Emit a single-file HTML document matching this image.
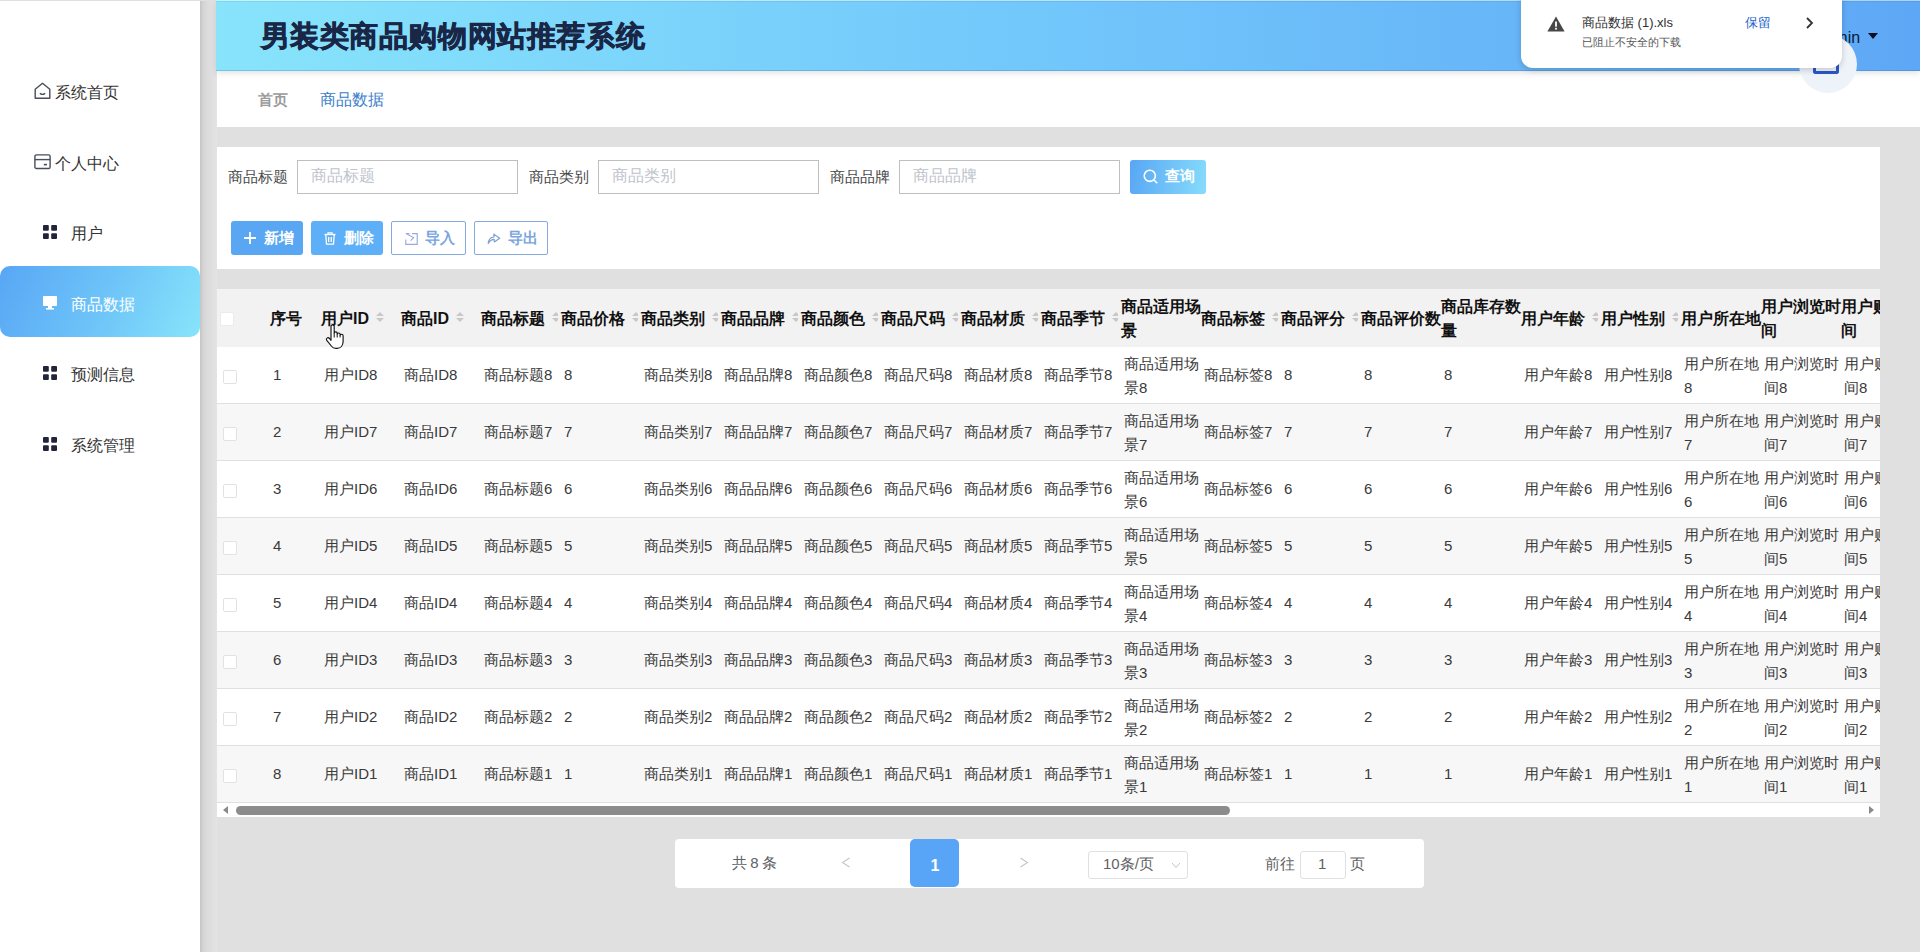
<!DOCTYPE html><html><head><meta charset="utf-8"><style>
*{margin:0;padding:0;box-sizing:border-box}
html,body{width:1920px;height:952px;overflow:hidden;background:#e0e0e0;font-family:"Liberation Sans",sans-serif;position:relative}
.a{position:absolute}
.side{left:0;top:1px;width:200px;height:951px;background:#fff}
.sideshadow{left:200px;top:1px;width:17px;height:951px;background:linear-gradient(90deg,#c4c4c4 0,#d4d4d4 3px,#dcdcdc 8px,#e0e0e0 13px,#e4e4e4 17px)}
.mi{left:0;width:200px;height:71px;font-size:16px;color:#333;white-space:nowrap}
.mi span{position:absolute;line-height:16px}
.active{background:linear-gradient(115deg,#58a6f5 0%,#6fc6f8 55%,#88e4fb 100%);border-radius:10px;color:#fff}
.header{left:216px;top:0;width:1704px;height:71px;background:linear-gradient(90deg,#88e4fb 0%,#73c9fb 45%,#5ea7f6 100%);box-shadow:inset 0 -1px 0 rgba(40,90,150,.22),0 2px 6px rgba(0,0,0,.12);z-index:2}
.title{left:44.5px;top:17px;font-size:29px;font-weight:bold;color:#192646;line-height:38px;white-space:nowrap;letter-spacing:0.6px;-webkit-text-stroke:0.7px #192646}
.tabs{left:217px;top:70px;width:1703px;height:57px;background:#fff;z-index:1}
.panel{background:#fff}
.lbl{font-size:15px;color:#4a4a4a;line-height:16px;white-space:nowrap}
.inp{height:34px;width:221px;border:1px solid #bfbfbf;background:#fff}
.ph{font-size:16px;color:#c0c4cc;line-height:16px;white-space:nowrap}
.btn{height:34px;border-radius:3px;font-size:15px;font-weight:bold;white-space:nowrap}
.th{font-size:16px;font-weight:bold;color:#111;line-height:24px;white-space:nowrap}
.td{font-size:15px;color:#3a3a3a;line-height:24px;white-space:nowrap}
.cb{width:14px;height:14px;border:1px solid #e2e2e2;border-radius:2px;background:#fff}
</style></head><body>
<div class="a side"></div><div class="a sideshadow"></div>
<div class="a" style="left:34px;top:82px"><svg width="17" height="18" viewBox="0 0 17 18" fill="none" stroke="#4a4d5a" stroke-width="1.4" stroke-linejoin="round"><path d="M1.2 7.2 L8.5 1.2 L15.8 7.2 V16.3 H1.2 Z"/><path d="M6.3 11.6 Q8.5 13.2 10.7 11.6" stroke-linecap="round"/></svg></div>
<div class="a mi" style="left:55px;top:85px;width:auto;height:auto;line-height:16px">系统首页</div>
<div class="a" style="left:33.5px;top:153.5px"><svg width="17" height="16" viewBox="0 0 17 16" fill="none" stroke="#4a4d5a" stroke-width="1.4"><rect x="0.9" y="0.9" width="15.2" height="13.6" rx="1.6"/><path d="M0.9 5.6 H16.1"/><path d="M9.8 10.6 H13" stroke-width="1.6"/></svg></div>
<div class="a mi" style="left:55px;top:155.5px;width:auto;height:auto;line-height:16px">个人中心</div>
<div class="a" style="left:43px;top:225px"><svg width="14" height="14" viewBox="0 0 14 14" fill="#22243a"><rect x="0" y="0" width="5.8" height="5.8" rx="1"/><rect x="8.2" y="0" width="5.8" height="5.8" rx="1"/><rect x="0" y="8.2" width="5.8" height="5.8" rx="1"/><rect x="8.2" y="8.2" width="5.8" height="5.8" rx="1"/></svg></div>
<div class="a mi" style="left:71px;top:226px;width:auto;height:auto;line-height:16px">用户</div>
<div class="a active" style="left:0;top:266px;width:200px;height:71px"></div>
<div class="a" style="left:43px;top:296px"><svg width="14" height="14" viewBox="0 0 14 14" fill="#fff"><rect x="0" y="0" width="14" height="10" rx="0.8"/><rect x="5" y="10" width="4" height="2"/><rect x="3" y="12" width="8" height="1.6"/></svg></div>
<div class="a mi" style="left:71px;top:297px;width:auto;height:auto;line-height:16px;color:#fff">商品数据</div>
<div class="a" style="left:43px;top:366px"><svg width="14" height="14" viewBox="0 0 14 14" fill="#22243a"><rect x="0" y="0" width="5.8" height="5.8" rx="1"/><rect x="8.2" y="0" width="5.8" height="5.8" rx="1"/><rect x="0" y="8.2" width="5.8" height="5.8" rx="1"/><rect x="8.2" y="8.2" width="5.8" height="5.8" rx="1"/></svg></div>
<div class="a mi" style="left:71px;top:367px;width:auto;height:auto;line-height:16px">预测信息</div>
<div class="a" style="left:43px;top:437px"><svg width="14" height="14" viewBox="0 0 14 14" fill="#22243a"><rect x="0" y="0" width="5.8" height="5.8" rx="1"/><rect x="8.2" y="0" width="5.8" height="5.8" rx="1"/><rect x="0" y="8.2" width="5.8" height="5.8" rx="1"/><rect x="8.2" y="8.2" width="5.8" height="5.8" rx="1"/></svg></div>
<div class="a mi" style="left:71px;top:438px;width:auto;height:auto;line-height:16px">系统管理</div>
<div class="a header">
<div class="a" style="left:0;top:0;width:1704px;height:1px;background:rgba(255,255,255,.5)"></div><div class="a" style="left:0;top:1px;width:1704px;height:1px;background:rgba(0,70,110,.08)"></div>
<div class="a title">男装类商品购物网站推荐系统</div>
<div class="a" style="left:1600.5px;top:29.5px;font-size:16px;color:#0a1a33;line-height:16px">admin</div>
<div class="a" style="left:1652px;top:32.8px;width:0;height:0;border-left:5px solid transparent;border-right:5px solid transparent;border-top:6px solid #0a0f20"></div>
</div>
<div class="a tabs"></div>
<div class="a " style="left:258px;top:92px;font-size:15px;font-weight:bold;color:#9b9b9b;line-height:16px;z-index:3">首页</div>
<div class="a " style="left:320px;top:92px;font-size:16px;color:#3a7ec9;line-height:16px;z-index:3">商品数据</div>
<div class="a" style="left:1799px;top:35px;width:58px;height:58px;border-radius:50%;background:#eef2f9;z-index:4"></div>
<div class="a" style="left:1813px;top:56px;width:26px;height:18px;border:3px solid #2b57c7;border-top:none;border-radius:0 0 3px 3px;z-index:4"></div>
<div class="a" style="left:1521px;top:-12px;width:321px;height:79.5px;background:#fff;border-radius:12px;box-shadow:0 2px 6px rgba(0,0,0,.18);z-index:5">
<svg class="a" style="left:26px;top:28px" width="18" height="16" viewBox="0 0 18 16"><path d="M9 0.5 L17.6 15.5 H0.4 Z" fill="#474747"/><rect x="8.1" y="5.5" width="1.8" height="5.2" fill="#fff"/><rect x="8.1" y="11.8" width="1.8" height="1.8" fill="#fff"/></svg>
<div class="a" style="left:61px;top:27px;font-size:13px;color:#303030;line-height:16px;white-space:nowrap">商品数据 (1).xls</div>
<div class="a" style="left:61px;top:48px;font-size:11px;color:#555;line-height:13px;white-space:nowrap">已阻止不安全的下载</div>
<div class="a" style="left:224px;top:27px;font-size:13px;color:#1a62c9;line-height:16px;white-space:nowrap">保留</div>
<svg class="a" style="left:284px;top:29px" width="10" height="12" viewBox="0 0 10 12" fill="none" stroke="#333" stroke-width="1.8"><path d="M2 1 L7 6 L2 11"/></svg>
</div>
<div class="a panel" style="left:217px;top:147px;width:1663px;height:122px"></div>
<div class="a lbl" style="left:228px;top:169px;">商品标题</div>
<div class="a inp" style="left:297px;top:160px"></div>
<div class="a ph" style="left:311px;top:168px;">商品标题</div>
<div class="a lbl" style="left:529px;top:169px;">商品类别</div>
<div class="a inp" style="left:598px;top:160px"></div>
<div class="a ph" style="left:612px;top:168px;">商品类别</div>
<div class="a lbl" style="left:830px;top:169px;">商品品牌</div>
<div class="a inp" style="left:899px;top:160px"></div>
<div class="a ph" style="left:913px;top:168px;">商品品牌</div>
<div class="a btn" style="left:1130px;top:160px;width:76px;background:linear-gradient(100deg,#58a6f5,#86dcfb)"></div>
<svg class="a" style="left:1143px;top:169px" width="15" height="15" viewBox="0 0 15 15" fill="none" stroke="#fff" stroke-width="1.6"><circle cx="6.8" cy="6.8" r="5.6"/><path d="M11 11 L13.8 13.8" stroke-linecap="round"/></svg>
<div class="a " style="left:1165px;top:168px;font-size:15px;font-weight:bold;color:#fff;line-height:16px">查询</div>
<div class="a btn" style="left:231px;top:221px;width:72px;background:#59a6f2"></div>
<svg class="a" style="left:244px;top:232px" width="12" height="12" viewBox="0 0 12 12" stroke="#fff" stroke-width="1.8"><path d="M6 0 V12 M0 6 H12"/></svg>
<div class="a " style="left:264px;top:230px;font-size:15px;font-weight:bold;color:#fff;line-height:16px">新增</div>
<div class="a btn" style="left:311px;top:221px;width:72px;background:#5db0f7"></div>
<svg class="a" style="left:324px;top:232px" width="12" height="13" viewBox="0 0 12 13" fill="none" stroke="#fff" stroke-width="1.3"><path d="M0.5 2.5 H11.5"/><path d="M4 2.5 V0.8 H8 V2.5"/><path d="M1.8 2.5 L2.5 12.2 H9.5 L10.2 2.5"/><path d="M4.7 5 V10 M7.3 5 V10"/></svg>
<div class="a " style="left:344px;top:230px;font-size:15px;font-weight:bold;color:#fff;line-height:16px">删除</div>
<div class="a btn" style="left:391px;top:221px;width:75px;border:1px solid #84a9dc;border-radius:2px;background:#fff"></div>
<svg class="a" style="left:405px;top:233px" width="14" height="13" viewBox="0 0 14 13" fill="none" stroke="#9ba9de" stroke-width="1.15"><path d="M0.8 0.6 H4.4"/><path d="M7 0.6 H12.2 V11.4 H0.8 V6.5"/><path d="M1.8 0.9 L8.6 4.6 L5.6 7.6"/></svg>
<div class="a " style="left:425px;top:230px;font-size:15px;font-weight:bold;color:#79a5e0;line-height:16px">导入</div>
<div class="a btn" style="left:474px;top:221px;width:74px;border:1px solid #84a9dc;border-radius:2px;background:#fff"></div>
<svg class="a" style="left:487px;top:233px" width="14" height="12" viewBox="0 0 14 12" fill="none" stroke="#7a9fd2" stroke-width="1.15" stroke-linejoin="round"><path d="M1.2 10.6 C1.5 6.6 3.5 4.2 7 4 L6.8 1.1 L12.7 5.3 L7.3 8.9 L7.2 6.3 C4.5 6.3 2.6 7.8 1.2 10.6 Z"/></svg>
<div class="a " style="left:508px;top:230px;font-size:15px;font-weight:bold;color:#79a5e0;line-height:16px">导出</div>
<div class="a panel" style="left:217px;top:289px;width:1663px;height:528px;overflow:hidden">
<div class="a" style="left:0;top:0;width:1663px;height:58px;background:#f2f2f2"></div>
<div class="a cb" style="left:3px;top:23px;border-color:#ebebeb"></div>
<div class="a th" style="left:53px;top:18px;">序号</div>
<div class="a th" style="left:104px;top:18px;">用户ID</div>
<div class="a th" style="left:184px;top:18px;">商品ID</div>
<div class="a th" style="left:264px;top:18px;">商品标题</div>
<div class="a th" style="left:344px;top:18px;">商品价格</div>
<div class="a th" style="left:424px;top:18px;">商品类别</div>
<div class="a th" style="left:504px;top:18px;">商品品牌</div>
<div class="a th" style="left:584px;top:18px;">商品颜色</div>
<div class="a th" style="left:664px;top:18px;">商品尺码</div>
<div class="a th" style="left:744px;top:18px;">商品材质</div>
<div class="a th" style="left:824px;top:18px;">商品季节</div>
<div class="a th" style="left:904px;top:6px;">商品适用场<br>景</div>
<div class="a th" style="left:984px;top:18px;">商品标签</div>
<div class="a th" style="left:1064px;top:18px;">商品评分</div>
<div class="a th" style="left:1144px;top:18px;">商品评价数</div>
<div class="a th" style="left:1224px;top:6px;">商品库存数<br>量</div>
<div class="a th" style="left:1304px;top:18px;">用户年龄</div>
<div class="a th" style="left:1384px;top:18px;">用户性别</div>
<div class="a th" style="left:1464px;top:18px;">用户所在地</div>
<div class="a th" style="left:1544px;top:6px;">用户浏览时<br>间</div>
<div class="a th" style="left:1624px;top:6px;">用户购买时<br>间</div>
<div class="a" style="left:159px;top:23px;width:8px;height:11px"><div class="a" style="left:0;top:0;width:0;height:0;border-left:4px solid transparent;border-right:4px solid transparent;border-bottom:4.5px solid #c8c8c8"></div><div class="a" style="left:0;top:6px;width:0;height:0;border-left:4px solid transparent;border-right:4px solid transparent;border-top:4.5px solid #c8c8c8"></div></div>
<div class="a" style="left:239px;top:23px;width:8px;height:11px"><div class="a" style="left:0;top:0;width:0;height:0;border-left:4px solid transparent;border-right:4px solid transparent;border-bottom:4.5px solid #c8c8c8"></div><div class="a" style="left:0;top:6px;width:0;height:0;border-left:4px solid transparent;border-right:4px solid transparent;border-top:4.5px solid #c8c8c8"></div></div>
<div class="a" style="left:335px;top:23px;width:6px;height:11px;overflow:hidden"><div class="a" style="left:0;top:0;width:0;height:0;border-left:4px solid transparent;border-right:4px solid transparent;border-bottom:4.5px solid #c8c8c8"></div><div class="a" style="left:0;top:6px;width:0;height:0;border-left:4px solid transparent;border-right:4px solid transparent;border-top:4.5px solid #c8c8c8"></div></div>
<div class="a" style="left:415px;top:23px;width:6px;height:11px;overflow:hidden"><div class="a" style="left:0;top:0;width:0;height:0;border-left:4px solid transparent;border-right:4px solid transparent;border-bottom:4.5px solid #c8c8c8"></div><div class="a" style="left:0;top:6px;width:0;height:0;border-left:4px solid transparent;border-right:4px solid transparent;border-top:4.5px solid #c8c8c8"></div></div>
<div class="a" style="left:495px;top:23px;width:6px;height:11px;overflow:hidden"><div class="a" style="left:0;top:0;width:0;height:0;border-left:4px solid transparent;border-right:4px solid transparent;border-bottom:4.5px solid #c8c8c8"></div><div class="a" style="left:0;top:6px;width:0;height:0;border-left:4px solid transparent;border-right:4px solid transparent;border-top:4.5px solid #c8c8c8"></div></div>
<div class="a" style="left:575px;top:23px;width:6px;height:11px;overflow:hidden"><div class="a" style="left:0;top:0;width:0;height:0;border-left:4px solid transparent;border-right:4px solid transparent;border-bottom:4.5px solid #c8c8c8"></div><div class="a" style="left:0;top:6px;width:0;height:0;border-left:4px solid transparent;border-right:4px solid transparent;border-top:4.5px solid #c8c8c8"></div></div>
<div class="a" style="left:655px;top:23px;width:6px;height:11px;overflow:hidden"><div class="a" style="left:0;top:0;width:0;height:0;border-left:4px solid transparent;border-right:4px solid transparent;border-bottom:4.5px solid #c8c8c8"></div><div class="a" style="left:0;top:6px;width:0;height:0;border-left:4px solid transparent;border-right:4px solid transparent;border-top:4.5px solid #c8c8c8"></div></div>
<div class="a" style="left:735px;top:23px;width:6px;height:11px;overflow:hidden"><div class="a" style="left:0;top:0;width:0;height:0;border-left:4px solid transparent;border-right:4px solid transparent;border-bottom:4.5px solid #c8c8c8"></div><div class="a" style="left:0;top:6px;width:0;height:0;border-left:4px solid transparent;border-right:4px solid transparent;border-top:4.5px solid #c8c8c8"></div></div>
<div class="a" style="left:815px;top:23px;width:6px;height:11px;overflow:hidden"><div class="a" style="left:0;top:0;width:0;height:0;border-left:4px solid transparent;border-right:4px solid transparent;border-bottom:4.5px solid #c8c8c8"></div><div class="a" style="left:0;top:6px;width:0;height:0;border-left:4px solid transparent;border-right:4px solid transparent;border-top:4.5px solid #c8c8c8"></div></div>
<div class="a" style="left:895px;top:23px;width:6px;height:11px;overflow:hidden"><div class="a" style="left:0;top:0;width:0;height:0;border-left:4px solid transparent;border-right:4px solid transparent;border-bottom:4.5px solid #c8c8c8"></div><div class="a" style="left:0;top:6px;width:0;height:0;border-left:4px solid transparent;border-right:4px solid transparent;border-top:4.5px solid #c8c8c8"></div></div>
<div class="a" style="left:1055px;top:23px;width:6px;height:11px;overflow:hidden"><div class="a" style="left:0;top:0;width:0;height:0;border-left:4px solid transparent;border-right:4px solid transparent;border-bottom:4.5px solid #c8c8c8"></div><div class="a" style="left:0;top:6px;width:0;height:0;border-left:4px solid transparent;border-right:4px solid transparent;border-top:4.5px solid #c8c8c8"></div></div>
<div class="a" style="left:1135px;top:23px;width:6px;height:11px;overflow:hidden"><div class="a" style="left:0;top:0;width:0;height:0;border-left:4px solid transparent;border-right:4px solid transparent;border-bottom:4.5px solid #c8c8c8"></div><div class="a" style="left:0;top:6px;width:0;height:0;border-left:4px solid transparent;border-right:4px solid transparent;border-top:4.5px solid #c8c8c8"></div></div>
<div class="a" style="left:1375px;top:23px;width:6px;height:11px;overflow:hidden"><div class="a" style="left:0;top:0;width:0;height:0;border-left:4px solid transparent;border-right:4px solid transparent;border-bottom:4.5px solid #c8c8c8"></div><div class="a" style="left:0;top:6px;width:0;height:0;border-left:4px solid transparent;border-right:4px solid transparent;border-top:4.5px solid #c8c8c8"></div></div>
<div class="a" style="left:1455px;top:23px;width:6px;height:11px;overflow:hidden"><div class="a" style="left:0;top:0;width:0;height:0;border-left:4px solid transparent;border-right:4px solid transparent;border-bottom:4.5px solid #c8c8c8"></div><div class="a" style="left:0;top:6px;width:0;height:0;border-left:4px solid transparent;border-right:4px solid transparent;border-top:4.5px solid #c8c8c8"></div></div>
<div class="a" style="left:0;top:58px;width:1663px;height:57px;background:#fff;border-bottom:1px solid #e0e0e0"></div>
<div class="a cb" style="left:6px;top:81px;"></div>
<div class="a td" style="left:56px;top:74px;">1</div>
<div class="a td" style="left:107px;top:74px;">用户ID8</div>
<div class="a td" style="left:187px;top:74px;">商品ID8</div>
<div class="a td" style="left:267px;top:74px;">商品标题8</div>
<div class="a td" style="left:347px;top:74px;">8</div>
<div class="a td" style="left:427px;top:74px;">商品类别8</div>
<div class="a td" style="left:507px;top:74px;">商品品牌8</div>
<div class="a td" style="left:587px;top:74px;">商品颜色8</div>
<div class="a td" style="left:667px;top:74px;">商品尺码8</div>
<div class="a td" style="left:747px;top:74px;">商品材质8</div>
<div class="a td" style="left:827px;top:74px;">商品季节8</div>
<div class="a td" style="left:907px;top:63px;">商品适用场<br>景8</div>
<div class="a td" style="left:987px;top:74px;">商品标签8</div>
<div class="a td" style="left:1067px;top:74px;">8</div>
<div class="a td" style="left:1147px;top:74px;">8</div>
<div class="a td" style="left:1227px;top:74px;">8</div>
<div class="a td" style="left:1307px;top:74px;">用户年龄8</div>
<div class="a td" style="left:1387px;top:74px;">用户性别8</div>
<div class="a td" style="left:1467px;top:63px;">用户所在地<br>8</div>
<div class="a td" style="left:1547px;top:63px;">用户浏览时<br>间8</div>
<div class="a td" style="left:1627px;top:63px;">用户购买时<br>间8</div>
<div class="a" style="left:0;top:115px;width:1663px;height:57px;background:#f7f7f7;border-bottom:1px solid #e0e0e0"></div>
<div class="a cb" style="left:6px;top:138px;"></div>
<div class="a td" style="left:56px;top:131px;">2</div>
<div class="a td" style="left:107px;top:131px;">用户ID7</div>
<div class="a td" style="left:187px;top:131px;">商品ID7</div>
<div class="a td" style="left:267px;top:131px;">商品标题7</div>
<div class="a td" style="left:347px;top:131px;">7</div>
<div class="a td" style="left:427px;top:131px;">商品类别7</div>
<div class="a td" style="left:507px;top:131px;">商品品牌7</div>
<div class="a td" style="left:587px;top:131px;">商品颜色7</div>
<div class="a td" style="left:667px;top:131px;">商品尺码7</div>
<div class="a td" style="left:747px;top:131px;">商品材质7</div>
<div class="a td" style="left:827px;top:131px;">商品季节7</div>
<div class="a td" style="left:907px;top:120px;">商品适用场<br>景7</div>
<div class="a td" style="left:987px;top:131px;">商品标签7</div>
<div class="a td" style="left:1067px;top:131px;">7</div>
<div class="a td" style="left:1147px;top:131px;">7</div>
<div class="a td" style="left:1227px;top:131px;">7</div>
<div class="a td" style="left:1307px;top:131px;">用户年龄7</div>
<div class="a td" style="left:1387px;top:131px;">用户性别7</div>
<div class="a td" style="left:1467px;top:120px;">用户所在地<br>7</div>
<div class="a td" style="left:1547px;top:120px;">用户浏览时<br>间7</div>
<div class="a td" style="left:1627px;top:120px;">用户购买时<br>间7</div>
<div class="a" style="left:0;top:172px;width:1663px;height:57px;background:#fff;border-bottom:1px solid #e0e0e0"></div>
<div class="a cb" style="left:6px;top:195px;"></div>
<div class="a td" style="left:56px;top:188px;">3</div>
<div class="a td" style="left:107px;top:188px;">用户ID6</div>
<div class="a td" style="left:187px;top:188px;">商品ID6</div>
<div class="a td" style="left:267px;top:188px;">商品标题6</div>
<div class="a td" style="left:347px;top:188px;">6</div>
<div class="a td" style="left:427px;top:188px;">商品类别6</div>
<div class="a td" style="left:507px;top:188px;">商品品牌6</div>
<div class="a td" style="left:587px;top:188px;">商品颜色6</div>
<div class="a td" style="left:667px;top:188px;">商品尺码6</div>
<div class="a td" style="left:747px;top:188px;">商品材质6</div>
<div class="a td" style="left:827px;top:188px;">商品季节6</div>
<div class="a td" style="left:907px;top:177px;">商品适用场<br>景6</div>
<div class="a td" style="left:987px;top:188px;">商品标签6</div>
<div class="a td" style="left:1067px;top:188px;">6</div>
<div class="a td" style="left:1147px;top:188px;">6</div>
<div class="a td" style="left:1227px;top:188px;">6</div>
<div class="a td" style="left:1307px;top:188px;">用户年龄6</div>
<div class="a td" style="left:1387px;top:188px;">用户性别6</div>
<div class="a td" style="left:1467px;top:177px;">用户所在地<br>6</div>
<div class="a td" style="left:1547px;top:177px;">用户浏览时<br>间6</div>
<div class="a td" style="left:1627px;top:177px;">用户购买时<br>间6</div>
<div class="a" style="left:0;top:229px;width:1663px;height:57px;background:#f7f7f7;border-bottom:1px solid #e0e0e0"></div>
<div class="a cb" style="left:6px;top:252px;"></div>
<div class="a td" style="left:56px;top:245px;">4</div>
<div class="a td" style="left:107px;top:245px;">用户ID5</div>
<div class="a td" style="left:187px;top:245px;">商品ID5</div>
<div class="a td" style="left:267px;top:245px;">商品标题5</div>
<div class="a td" style="left:347px;top:245px;">5</div>
<div class="a td" style="left:427px;top:245px;">商品类别5</div>
<div class="a td" style="left:507px;top:245px;">商品品牌5</div>
<div class="a td" style="left:587px;top:245px;">商品颜色5</div>
<div class="a td" style="left:667px;top:245px;">商品尺码5</div>
<div class="a td" style="left:747px;top:245px;">商品材质5</div>
<div class="a td" style="left:827px;top:245px;">商品季节5</div>
<div class="a td" style="left:907px;top:234px;">商品适用场<br>景5</div>
<div class="a td" style="left:987px;top:245px;">商品标签5</div>
<div class="a td" style="left:1067px;top:245px;">5</div>
<div class="a td" style="left:1147px;top:245px;">5</div>
<div class="a td" style="left:1227px;top:245px;">5</div>
<div class="a td" style="left:1307px;top:245px;">用户年龄5</div>
<div class="a td" style="left:1387px;top:245px;">用户性别5</div>
<div class="a td" style="left:1467px;top:234px;">用户所在地<br>5</div>
<div class="a td" style="left:1547px;top:234px;">用户浏览时<br>间5</div>
<div class="a td" style="left:1627px;top:234px;">用户购买时<br>间5</div>
<div class="a" style="left:0;top:286px;width:1663px;height:57px;background:#fff;border-bottom:1px solid #e0e0e0"></div>
<div class="a cb" style="left:6px;top:309px;"></div>
<div class="a td" style="left:56px;top:302px;">5</div>
<div class="a td" style="left:107px;top:302px;">用户ID4</div>
<div class="a td" style="left:187px;top:302px;">商品ID4</div>
<div class="a td" style="left:267px;top:302px;">商品标题4</div>
<div class="a td" style="left:347px;top:302px;">4</div>
<div class="a td" style="left:427px;top:302px;">商品类别4</div>
<div class="a td" style="left:507px;top:302px;">商品品牌4</div>
<div class="a td" style="left:587px;top:302px;">商品颜色4</div>
<div class="a td" style="left:667px;top:302px;">商品尺码4</div>
<div class="a td" style="left:747px;top:302px;">商品材质4</div>
<div class="a td" style="left:827px;top:302px;">商品季节4</div>
<div class="a td" style="left:907px;top:291px;">商品适用场<br>景4</div>
<div class="a td" style="left:987px;top:302px;">商品标签4</div>
<div class="a td" style="left:1067px;top:302px;">4</div>
<div class="a td" style="left:1147px;top:302px;">4</div>
<div class="a td" style="left:1227px;top:302px;">4</div>
<div class="a td" style="left:1307px;top:302px;">用户年龄4</div>
<div class="a td" style="left:1387px;top:302px;">用户性别4</div>
<div class="a td" style="left:1467px;top:291px;">用户所在地<br>4</div>
<div class="a td" style="left:1547px;top:291px;">用户浏览时<br>间4</div>
<div class="a td" style="left:1627px;top:291px;">用户购买时<br>间4</div>
<div class="a" style="left:0;top:343px;width:1663px;height:57px;background:#f7f7f7;border-bottom:1px solid #e0e0e0"></div>
<div class="a cb" style="left:6px;top:366px;"></div>
<div class="a td" style="left:56px;top:359px;">6</div>
<div class="a td" style="left:107px;top:359px;">用户ID3</div>
<div class="a td" style="left:187px;top:359px;">商品ID3</div>
<div class="a td" style="left:267px;top:359px;">商品标题3</div>
<div class="a td" style="left:347px;top:359px;">3</div>
<div class="a td" style="left:427px;top:359px;">商品类别3</div>
<div class="a td" style="left:507px;top:359px;">商品品牌3</div>
<div class="a td" style="left:587px;top:359px;">商品颜色3</div>
<div class="a td" style="left:667px;top:359px;">商品尺码3</div>
<div class="a td" style="left:747px;top:359px;">商品材质3</div>
<div class="a td" style="left:827px;top:359px;">商品季节3</div>
<div class="a td" style="left:907px;top:348px;">商品适用场<br>景3</div>
<div class="a td" style="left:987px;top:359px;">商品标签3</div>
<div class="a td" style="left:1067px;top:359px;">3</div>
<div class="a td" style="left:1147px;top:359px;">3</div>
<div class="a td" style="left:1227px;top:359px;">3</div>
<div class="a td" style="left:1307px;top:359px;">用户年龄3</div>
<div class="a td" style="left:1387px;top:359px;">用户性别3</div>
<div class="a td" style="left:1467px;top:348px;">用户所在地<br>3</div>
<div class="a td" style="left:1547px;top:348px;">用户浏览时<br>间3</div>
<div class="a td" style="left:1627px;top:348px;">用户购买时<br>间3</div>
<div class="a" style="left:0;top:400px;width:1663px;height:57px;background:#fff;border-bottom:1px solid #e0e0e0"></div>
<div class="a cb" style="left:6px;top:423px;"></div>
<div class="a td" style="left:56px;top:416px;">7</div>
<div class="a td" style="left:107px;top:416px;">用户ID2</div>
<div class="a td" style="left:187px;top:416px;">商品ID2</div>
<div class="a td" style="left:267px;top:416px;">商品标题2</div>
<div class="a td" style="left:347px;top:416px;">2</div>
<div class="a td" style="left:427px;top:416px;">商品类别2</div>
<div class="a td" style="left:507px;top:416px;">商品品牌2</div>
<div class="a td" style="left:587px;top:416px;">商品颜色2</div>
<div class="a td" style="left:667px;top:416px;">商品尺码2</div>
<div class="a td" style="left:747px;top:416px;">商品材质2</div>
<div class="a td" style="left:827px;top:416px;">商品季节2</div>
<div class="a td" style="left:907px;top:405px;">商品适用场<br>景2</div>
<div class="a td" style="left:987px;top:416px;">商品标签2</div>
<div class="a td" style="left:1067px;top:416px;">2</div>
<div class="a td" style="left:1147px;top:416px;">2</div>
<div class="a td" style="left:1227px;top:416px;">2</div>
<div class="a td" style="left:1307px;top:416px;">用户年龄2</div>
<div class="a td" style="left:1387px;top:416px;">用户性别2</div>
<div class="a td" style="left:1467px;top:405px;">用户所在地<br>2</div>
<div class="a td" style="left:1547px;top:405px;">用户浏览时<br>间2</div>
<div class="a td" style="left:1627px;top:405px;">用户购买时<br>间2</div>
<div class="a" style="left:0;top:457px;width:1663px;height:57px;background:#f7f7f7;border-bottom:1px solid #e0e0e0"></div>
<div class="a cb" style="left:6px;top:480px;"></div>
<div class="a td" style="left:56px;top:473px;">8</div>
<div class="a td" style="left:107px;top:473px;">用户ID1</div>
<div class="a td" style="left:187px;top:473px;">商品ID1</div>
<div class="a td" style="left:267px;top:473px;">商品标题1</div>
<div class="a td" style="left:347px;top:473px;">1</div>
<div class="a td" style="left:427px;top:473px;">商品类别1</div>
<div class="a td" style="left:507px;top:473px;">商品品牌1</div>
<div class="a td" style="left:587px;top:473px;">商品颜色1</div>
<div class="a td" style="left:667px;top:473px;">商品尺码1</div>
<div class="a td" style="left:747px;top:473px;">商品材质1</div>
<div class="a td" style="left:827px;top:473px;">商品季节1</div>
<div class="a td" style="left:907px;top:462px;">商品适用场<br>景1</div>
<div class="a td" style="left:987px;top:473px;">商品标签1</div>
<div class="a td" style="left:1067px;top:473px;">1</div>
<div class="a td" style="left:1147px;top:473px;">1</div>
<div class="a td" style="left:1227px;top:473px;">1</div>
<div class="a td" style="left:1307px;top:473px;">用户年龄1</div>
<div class="a td" style="left:1387px;top:473px;">用户性别1</div>
<div class="a td" style="left:1467px;top:462px;">用户所在地<br>1</div>
<div class="a td" style="left:1547px;top:462px;">用户浏览时<br>间1</div>
<div class="a td" style="left:1627px;top:462px;">用户购买时<br>间1</div>
<div class="a" style="left:6px;top:517px;width:0;height:0;border-top:4.5px solid transparent;border-bottom:4.5px solid transparent;border-right:5px solid #8a8a8a"></div>
<div class="a" style="left:19px;top:517px;width:994px;height:9px;border-radius:5px;background:#8c8c8c"></div>
<div class="a" style="left:1652px;top:517px;width:0;height:0;border-top:4.5px solid transparent;border-bottom:4.5px solid transparent;border-left:5px solid #8a8a8a"></div>
</div>
<svg class="a" style="left:325px;top:324px;z-index:9" width="21" height="27" viewBox="0 0 21 27"><path d="M6 2.6 C6 1.6 6.7 1 7.6 1 C8.5 1 9.2 1.6 9.2 2.6 V9 C9.3 8.3 9.8 7.8 10.7 7.8 C11.6 7.8 12.2 8.4 12.2 9.2 V10 C12.4 9.4 12.9 9 13.7 9 C14.5 9 15.1 9.6 15.1 10.4 V11 C15.3 10.5 15.8 10.2 16.5 10.2 C17.4 10.2 18.1 10.9 18.1 11.8 V17.5 C18.1 21.5 15.8 24.4 12 24.4 H11 C8.8 24.4 7.5 23.6 6.3 22 L1.8 16.4 C1.2 15.6 1.3 14.6 2 14.1 C2.8 13.5 3.8 13.7 4.5 14.5 L6 16.3 Z" fill="#fff" stroke="#111" stroke-width="1.15" stroke-linejoin="round"/><path d="M9.2 9 V13.5 M12.2 10 V13.5 M15.1 11 V13.5" stroke="#111" stroke-width="1" fill="none"/></svg>
<div class="a" style="left:675px;top:838.5px;width:749px;height:49px;background:#fff;border-radius:4px"></div>
<div class="a " style="left:732px;top:855px;font-size:15px;color:#606266;line-height:16px;white-space:nowrap;word-spacing:-1px">共 8 条</div>
<svg class="a" style="left:841px;top:857px" width="10" height="11" viewBox="0 0 10 11" fill="none" stroke="#c0c4cc" stroke-width="1.1"><path d="M8.5 1 L1.5 5.5 L8.5 10"/></svg>
<div class="a" style="left:910px;top:839px;width:49px;height:48px;background:#58a5f8;border-radius:5px"></div>
<div class="a " style="left:930.5px;top:856.5px;font-size:16px;font-weight:bold;color:#fff;line-height:17px">1</div>
<svg class="a" style="left:1019px;top:857px" width="10" height="11" viewBox="0 0 10 11" fill="none" stroke="#c0c4cc" stroke-width="1.1"><path d="M1.5 1 L8.5 5.5 L1.5 10"/></svg>
<div class="a" style="left:1088px;top:851px;width:100px;height:28px;border:1px solid #e0e0e0;border-radius:3px;background:#fff"></div>
<div class="a " style="left:1103px;top:856px;font-size:15px;color:#606266;line-height:16px;white-space:nowrap">10条/页</div>
<svg class="a" style="left:1171px;top:862px" width="10" height="7" viewBox="0 0 10 7" fill="none" stroke="#c0c4cc" stroke-width="1"><path d="M1 1 L5 5.5 L9 1"/></svg>
<div class="a " style="left:1265px;top:856px;font-size:15px;color:#606266;line-height:16px;white-space:nowrap">前往</div>
<div class="a" style="left:1300px;top:851px;width:46px;height:28px;border:1px solid #e0e0e0;border-radius:3px;background:#fff"></div>
<div class="a " style="left:1318px;top:856px;font-size:15px;color:#606266;line-height:16px">1</div>
<div class="a " style="left:1350px;top:856px;font-size:15px;color:#606266;line-height:16px">页</div>
</body></html>
